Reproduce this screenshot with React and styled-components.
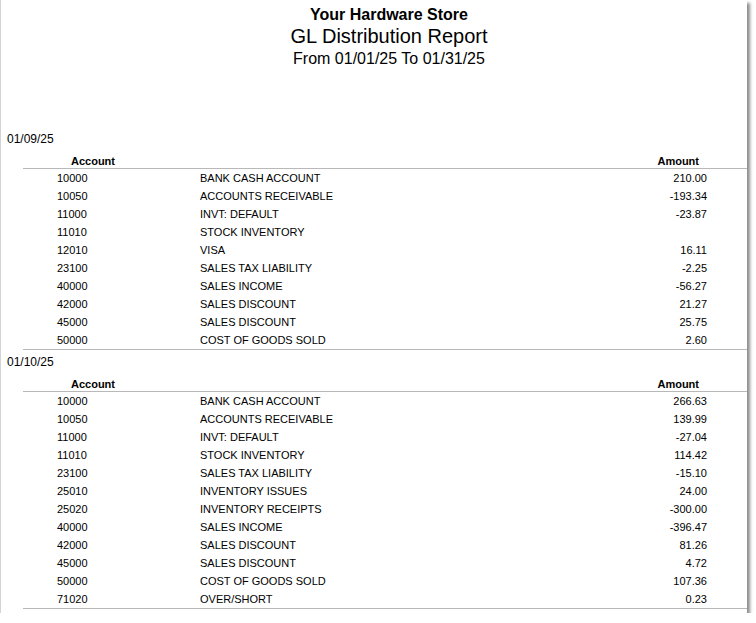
import React from "react";
import styled, { createGlobalStyle } from "styled-components";

const G = createGlobalStyle`
  body { margin:0; background:#fff; font-family:"Liberation Sans", Arial, sans-serif; color:#000; }
`;
const Page = styled.div`
  width:747px; height:613px; background:#fff; border-left:1px solid #d4d4d4;
  box-shadow: 3px 3px 3px rgba(0,0,0,0.45); box-sizing:border-box; padding-top:5px;
`;
const Head = styled.div`text-align:center; padding-left:30px;`;
const T1 = styled.div`font-weight:bold; font-size:16px; line-height:19px;`;
const T2 = styled.div`font-size:20px; line-height:25px;`;
const T3 = styled.div`font-size:16px; line-height:19px;`;
const Date = styled.div`font-size:12px; padding-left:6px; line-height:16px; margin-top:${p=>p.$mt}px;`;
const HeadRow = styled.div`
  display:flex; font-weight:bold; font-size:11px; margin-left:22px; border-bottom:1px solid #b8b8b8;
  height:14px; line-height:14px; margin-top:7px;
`;
const HAcc = styled.div`padding-left:48px; flex:1;`;
const HAmt = styled.div`width:80px; padding-right:48px; text-align:right;`;
const Row = styled.div`display:flex; font-size:11px; height:18px; line-height:18px;`;
const Code = styled.div`width:143px; padding-left:56px;`;
const Name = styled.div`flex:1;`;
const Amt = styled.div`width:100px; text-align:right; padding-right:40px;`;
const Rule = styled.div`margin-left:22px; border-bottom:1px solid #b8b8b8; margin-bottom:${p=>p.$mb||0}px;`;

const s1 = [["10000","BANK CASH ACCOUNT","210.00"],["10050","ACCOUNTS RECEIVABLE","-193.34"],["11000","INVT: DEFAULT","-23.87"],["11010","STOCK INVENTORY",""],["12010","VISA","16.11"],["23100","SALES TAX LIABILITY","-2.25"],["40000","SALES INCOME","-56.27"],["42000","SALES DISCOUNT","21.27"],["45000","SALES DISCOUNT","25.75"],["50000","COST OF GOODS SOLD","2.60"]];
const s2 = [["10000","BANK CASH ACCOUNT","266.63"],["10050","ACCOUNTS RECEIVABLE","139.99"],["11000","INVT: DEFAULT","-27.04"],["11010","STOCK INVENTORY","114.42"],["23100","SALES TAX LIABILITY","-15.10"],["25010","INVENTORY ISSUES","24.00"],["25020","INVENTORY RECEIPTS","-300.00"],["40000","SALES INCOME","-396.47"],["42000","SALES DISCOUNT","81.26"],["45000","SALES DISCOUNT","4.72"],["50000","COST OF GOODS SOLD","107.36"],["71020","OVER/SHORT","0.23"]];

const Section = ({date, rows, mt}) => (
  <>
    <Date $mt={mt}>{date}</Date>
    <HeadRow><HAcc>Account</HAcc><HAmt>Amount</HAmt></HeadRow>
    {rows.map((r,i)=>(<Row key={i}><Code>{r[0]}</Code><Name>{r[1]}</Name><Amt>{r[2]}</Amt></Row>))}
    <Rule />
  </>
);

export default function App(){
  return (<><G/><Page>
    <Head><T1>Your Hardware Store</T1><T2>GL Distribution Report</T2><T3>From 01/01/25 To 01/31/25</T3></Head>
    <Section date="01/09/25" rows={s1} mt={63}/>
    <Section date="01/10/25" rows={s2} mt={4}/>
  </Page></>);
}
